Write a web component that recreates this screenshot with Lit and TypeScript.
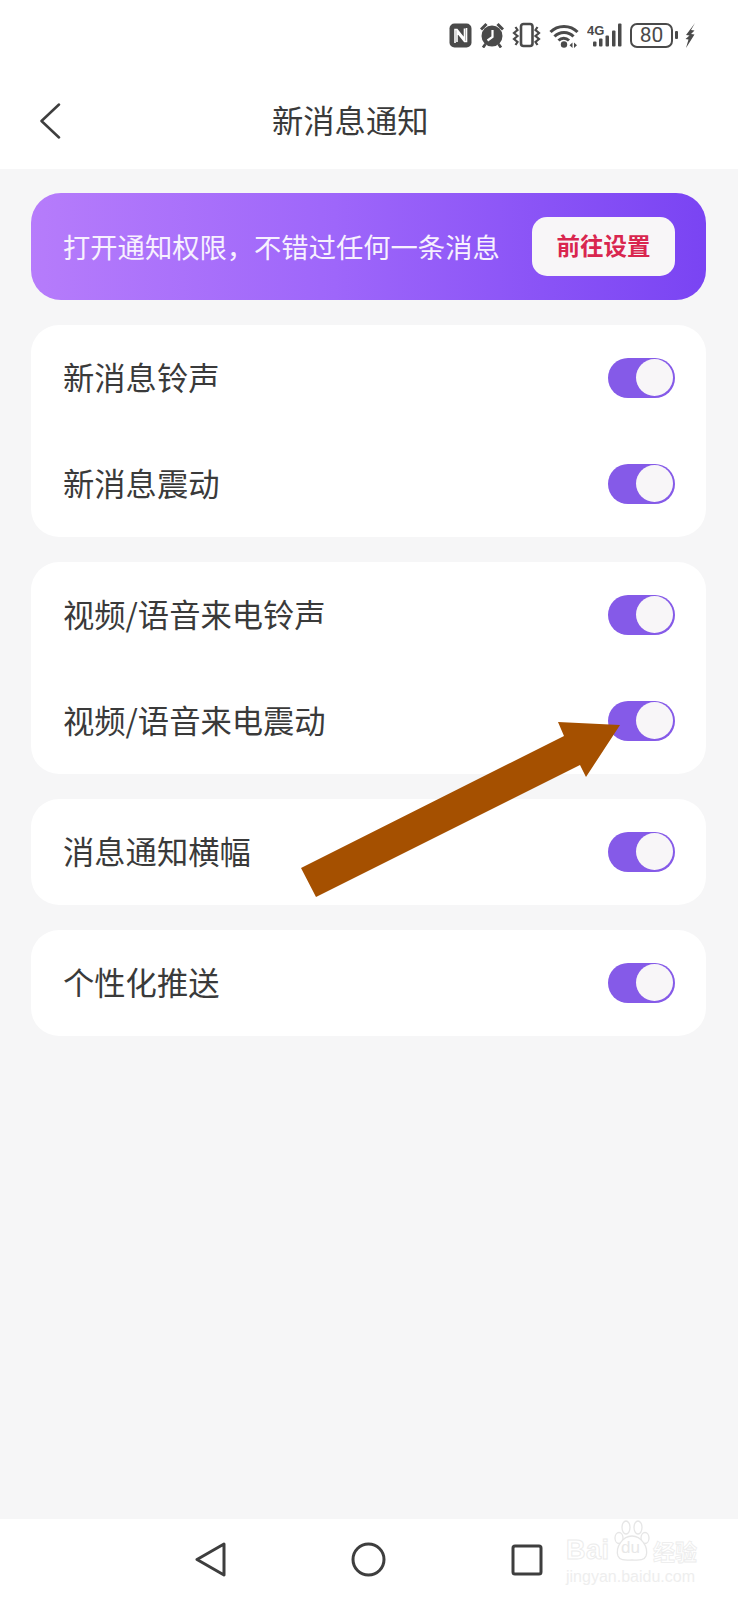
import { css, html, LitElement, svg } from 'lit'
import { customElement } from 'lit/decorators.js'

const dark = '#4a4a4a'

const statusIcons = html`
	<svg class="ic" width="23" height="25" viewBox="0 0 23 25">
		<rect x="0.5" y="0.5" width="22" height="24" rx="5" fill="${dark}" />
		<path d="M6 20V6.500h2L15.500 16V5.500M17.500 5v13.500h-2L8 9v10" fill="none" stroke="#fff" stroke-width="1.600" />
	</svg>
	<svg class="ic" width="24" height="26" viewBox="0 0 24 26">
		<circle cx="12" cy="14" r="10.500" fill="${dark}" />
		<path d="M12.500 8v7l-5 3.500" fill="none" stroke="#fff" stroke-width="2.200" />
		<path d="M1 7.500l5.500-5.500M23 7.500L17.500 2" stroke="${dark}" stroke-width="3" />
		<path d="M5.500 22l-2.500 3.500M18.500 22l2.500 3.500" stroke="${dark}" stroke-width="2.800" />
	</svg>
	<svg class="ic" width="29" height="26" viewBox="0 0 29 26">
		<rect x="9" y="2" width="11.500" height="22" rx="2.500" fill="none" stroke="${dark}" stroke-width="2.600" />
		<path d="M3.500 5l2 3-3.500 3 3.500 3-3.500 3 3.500 3-2 3M25.500 5l-2 3 3.500 3-3.500 3 3.500 3-3.500 3 2 3" fill="none" stroke="${dark}" stroke-width="2.200" />
	</svg>
	<svg class="ic" width="30" height="25" viewBox="0 0 30 25">
		<path d="M1.500 9C8.500 1.500 21.500 1.500 28.500 9M5.500 13.500c5-5.500 14-5.500 19 0M9.500 17.500c3-3 7.500-3 10.500 0" fill="none" stroke="${dark}" stroke-width="3" />
		<circle cx="15" cy="21.500" r="3.200" fill="${dark}" />
		<path d="M23.500 19.500v5.500l-3-2.700zM25 19.500v5.500l3-2.700z" fill="${dark}" />
	</svg>
	<svg class="ic" width="35" height="24" viewBox="0 0 35 24">
		<text x="0" y="11.500" class="net">4G</text>
		<g fill="${dark}">
			<rect x="6" y="18.500" width="3.500" height="5" rx="1" />
			<rect x="12" y="15.500" width="3.500" height="8" rx="1" />
			<rect x="18.500" y="12.500" width="3.500" height="11" rx="1" />
			<rect x="25" y="7.500" width="3.500" height="16" rx="1" />
			<rect x="31" y="0.500" width="3.500" height="23" rx="1" />
		</g>
	</svg>
	<span class="battery">80</span>
	<span class="battery-tip"></span>
	<svg class="ic bolt" width="10" height="25" viewBox="0 0 10 25">
		<path d="M10 0L1 12l3.500 0.500L0.500 16l3 0.500L1 25l8.500-13.500-3.500-0.500 3.500-3.500L6 7z" fill="${dark}" />
	</svg>
`

const paw = svg`
	<g fill="#fff" stroke="#e6e6e6" stroke-width="1.300">
		<ellipse cx="7" cy="18" rx="4" ry="5.500" />
		<ellipse cx="14" cy="7.500" rx="4" ry="6.500" />
		<ellipse cx="26" cy="7.500" rx="4" ry="6.500" />
		<ellipse cx="33" cy="18" rx="4" ry="5.500" />
		<path d="M20 16c9 0 17 11 14 20-2 5-8 4-14 4s-12 1-14-4c-3-9 5-20 14-20z" />
	</g>
`

const groups = [
	['新消息铃声', '新消息震动'],
	['视频/语音来电铃声', '视频/语音来电震动'],
	['消息通知横幅'],
	['个性化推送'],
]

@customElement('app-root')
export class AppRoot extends LitElement {
	static styles = css`
		:host {
			display: block;
			width: 738px;
			height: 1600px;
			overflow: hidden;
			font-family: 'Noto Sans CJK SC', 'Noto Sans', sans-serif;
			color: #3a3a3a;
		}

		.page {
			position: relative;
			display: flex;
			flex-direction: column;
			height: 100%;
			background-color: #f6f6f7;
		}

		.top {
			background-color: #fff;
		}

		.status-bar {
			display: flex;
			align-items: center;
			justify-content: flex-end;
			gap: 8px;
			height: 70px;
			padding-right: 43px;
			box-sizing: border-box;
		}

		.ic {
			display: block;
			flex: none;
		}

		.net {
			font: bold 13px 'Liberation Sans', sans-serif;
			fill: #4a4a4a;
		}

		.battery {
			display: flex;
			align-items: center;
			justify-content: center;
			width: 43px;
			height: 25px;
			box-sizing: border-box;
			border: 2px solid #4a4a4a;
			border-radius: 7px;
			font: 21px 'Roboto', sans-serif;
			color: #4a4a4a;
		}

		.battery-tip {
			width: 3px;
			height: 8px;
			margin-left: -6px;
			border-radius: 1px;
			background-color: #4a4a4a;
		}

		.bolt {
			margin-left: -1px;
		}

		.title-bar {
			display: flex;
			align-items: center;
			height: 99px;
			padding: 0 0 2px 39px;
			box-sizing: border-box;
		}

		.back {
			margin-top: 4px;
		}

		.title-bar h1 {
			margin: 2px 0 0 211px;
			font-size: 31.3px;
			font-weight: 400;
			line-height: 1;
		}

		.content {
			flex: 1;
			display: flex;
			flex-direction: column;
			gap: 25px;
			padding: 24px 32px 0 31px;
		}

		.banner {
			display: flex;
			align-items: center;
			justify-content: space-between;
			height: 106.5px;
			padding: 0 31px 0 32px;
			box-sizing: border-box;
			border-radius: 30px;
			background: linear-gradient(90deg, #b67cfb 0%, #9e66fa 45%, #7a44f3 100%);
			color: #f7f1fe;
			font-size: 27.3px;
			white-space: nowrap;
		}

		.banner button {
			width: 143px;
			height: 59px;
			padding: 0 0 3px;
			border: none;
			border-radius: 15px;
			background-color: #f8f6f8;
			color: #d9264f;
			font: 700 23.5px 'Noto Sans CJK SC', sans-serif;
		}

		.card {
			border-radius: 28px;
			background-color: #fff;
		}

		.row {
			display: flex;
			align-items: center;
			justify-content: space-between;
			height: 106px;
			padding: 0 31.5px 0 32px;
			font-size: 31.3px;
		}

		.row > span {
			margin-bottom: 2px;
		}

		.toggle {
			display: flex;
			justify-content: flex-end;
			align-items: center;
			width: 67px;
			height: 40px;
			padding: 1.5px;
			box-sizing: border-box;
			border-radius: 20px;
			background-color: #855ae8;
		}

		.toggle span {
			width: 37px;
			height: 37px;
			border-radius: 50%;
			background-color: #f8f6f8;
		}

		.nav {
			display: flex;
			align-items: center;
			height: 81px;
			padding-left: 195px;
			box-sizing: border-box;
			background-color: #fff;
		}

		.nav svg {
			display: block;
			flex: none;
			fill: none;
			stroke: #3e3e3e;
			stroke-width: 3px;
			stroke-linejoin: round;
		}

		.nav .home {
			margin-left: 124px;
		}

		.nav .recent {
			margin-left: 125px;
		}

		.arrow {
			position: absolute;
			left: 0;
			top: 0;
			pointer-events: none;
		}

		.watermark {
			position: absolute;
			left: 566px;
			top: 1520px;
			width: 132px;
			height: 64px;
			display: flex;
			flex-direction: column;
			color: #fff;
			font-family: 'Liberation Sans', sans-serif;
		}

		.wm-top {
			display: flex;
			align-items: flex-end;
			height: 43px;
			white-space: nowrap;
		}

		.wm-bai {
			width: 46px;
			font-size: 27px;
			font-weight: 700;
			line-height: 25px;
			letter-spacing: 0.5px;
			-webkit-text-stroke: 1px #ececec;
		}

		.wm-paw {
			position: relative;
			width: 41px;
			height: 43px;
			flex: none;
		}

		.wm-paw svg {
			display: block;
		}

		.wm-du {
			position: absolute;
			left: 9px;
			top: 18px;
			font-size: 17px;
			line-height: 20px;
			color: #e8e8e8;
		}

		.wm-jy {
			font-family: 'Noto Sans CJK SC', sans-serif;
			font-size: 22px;
			line-height: 26px;
			font-weight: 700;
			-webkit-text-stroke: 0.8px #ececec;
		}

		.wm-site {
			margin-top: 6px;
			font-size: 16px;
			line-height: 15px;
			white-space: nowrap;
			color: #eeeeee;
		}
	`

	render() {
		return html`
			<div class="page">
				<div class="top">
					<div class="status-bar">${statusIcons}</div>
					<div class="title-bar">
						<svg class="ic back" width="22" height="36" viewBox="0 0 22 36">
							<path d="M20 1.500L2.500 18 20 34.500" fill="none" stroke="#3e3e3e" stroke-width="2.500" stroke-linecap="round" stroke-linejoin="round" />
						</svg>
						<h1>新消息通知</h1>
					</div>
				</div>
				<div class="content">
					<div class="banner">
						<span>打开通知权限，不错过任何一条消息</span>
						<button>前往设置</button>
					</div>
					${groups.map(
						(rows) => html`
							<div class="card">
								${rows.map(
									(label) => html`
										<div class="row">
											<span>${label}</span>
											<div class="toggle"><span></span></div>
										</div>
									`
								)}
							</div>
						`
					)}
				</div>
				<div class="nav">
					<svg width="32" height="35" viewBox="0 0 32 35"><path d="M29 2L2 17.500 29 33z" /></svg>
					<svg class="home" width="35" height="35" viewBox="0 0 35 35"><circle cx="17.500" cy="17.500" r="15.500" /></svg>
					<svg class="recent" width="32" height="32" viewBox="0 0 32 32"><rect x="2" y="2" width="28" height="28" rx="2" /></svg>
				</div>
				<svg class="arrow" width="738" height="1600" viewBox="0 0 738 1600">
					<path d="M301 868L316 897 580 765 586 777 620 725 558 722 564 736z" fill="#a55000" />
				</svg>
				<div class="watermark">
					<div class="wm-top">
						<span class="wm-bai">Bai</span>
						<span class="wm-paw">
							<svg width="41" height="43" viewBox="0 0 41 43">${paw}</svg>
							<span class="wm-du">du</span>
						</span>
						<span class="wm-jy">经验</span>
					</div>
					<span class="wm-site">jingyan.baidu.com</span>
				</div>
			</div>
		`
	}
}
